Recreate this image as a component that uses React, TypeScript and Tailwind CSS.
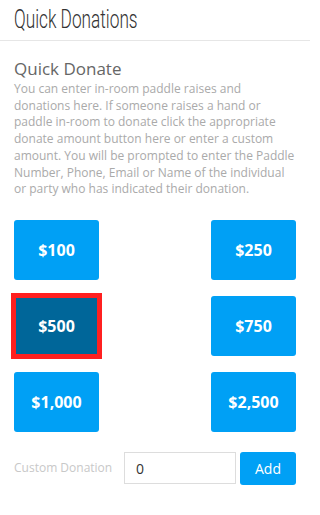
import { FC } from "react"

const amounts = ['$100', '$250', '$500', '$750', '$1,000', '$2,500']

const App: FC = () => {
  const selected = '$500'

  return (
    <div className="w-[310px] min-h-[515px] bg-white" style={{ fontFamily: '"Open Sans", sans-serif' }}>
      <div className="h-[41px] border-b border-[#e6e6e6] px-[14px] pt-[5px]">
        <h1
          className="inline-block origin-left scale-x-[0.69] whitespace-nowrap text-[25px] leading-[30px] font-light text-[#333]"
          style={{ fontFamily: 'Roboto, "Liberation Sans", sans-serif' }}
        >
          Quick Donations
        </h1>
      </div>
      <div className="px-[14px] pt-[16px]">
        <h2 className="text-[17px] leading-[24px] text-[#666]">Quick Donate</h2>
        <p className="text-[12px] leading-[16.7px] text-[#aaa]">
          You can enter in-room paddle raises and donations here. If someone raises a hand or paddle in-room to donate click the appropriate donate amount button here or enter a custom amount. You will be prompted to enter the Paddle Number, Phone, Email or Name of the individual or party who has indicated their donation.
        </p>
        <div className="grid grid-cols-2 gap-y-[16px] mt-[22px]">
          {amounts.map((a, i) => (
            <div key={a} className={i % 2 === 0 ? 'flex justify-start' : 'flex justify-end'}>
              <button
                className={
                  a === selected
                    ? 'w-[85px] h-[60px] bg-[#006699] text-white font-bold text-[16px] outline-[5px] outline-solid outline-[#ff2020] outline-offset-[-2px]'
                    : 'w-[85px] h-[60px] rounded-[3px] bg-[#00a0f5] text-white font-bold text-[16px]'
                }
              >
                {a}
              </button>
            </div>
          ))}
        </div>
        <div className="flex items-center mt-[20px]">
          <span className="text-[12px] text-[#c8c8c8] w-[110px] whitespace-nowrap">Custom Donation</span>
          <input
            type="text"
            defaultValue="0"
            className="w-[112px] h-[32px] border border-[#dddddd] px-[11px] text-[14px] text-[#333] outline-none"
          />
          <button className="ml-[4px] w-[56px] h-[33px] rounded-[3px] bg-[#00a0f5] text-white text-[14px]">
            Add
          </button>
        </div>
      </div>
    </div>
  )
}

export default App
